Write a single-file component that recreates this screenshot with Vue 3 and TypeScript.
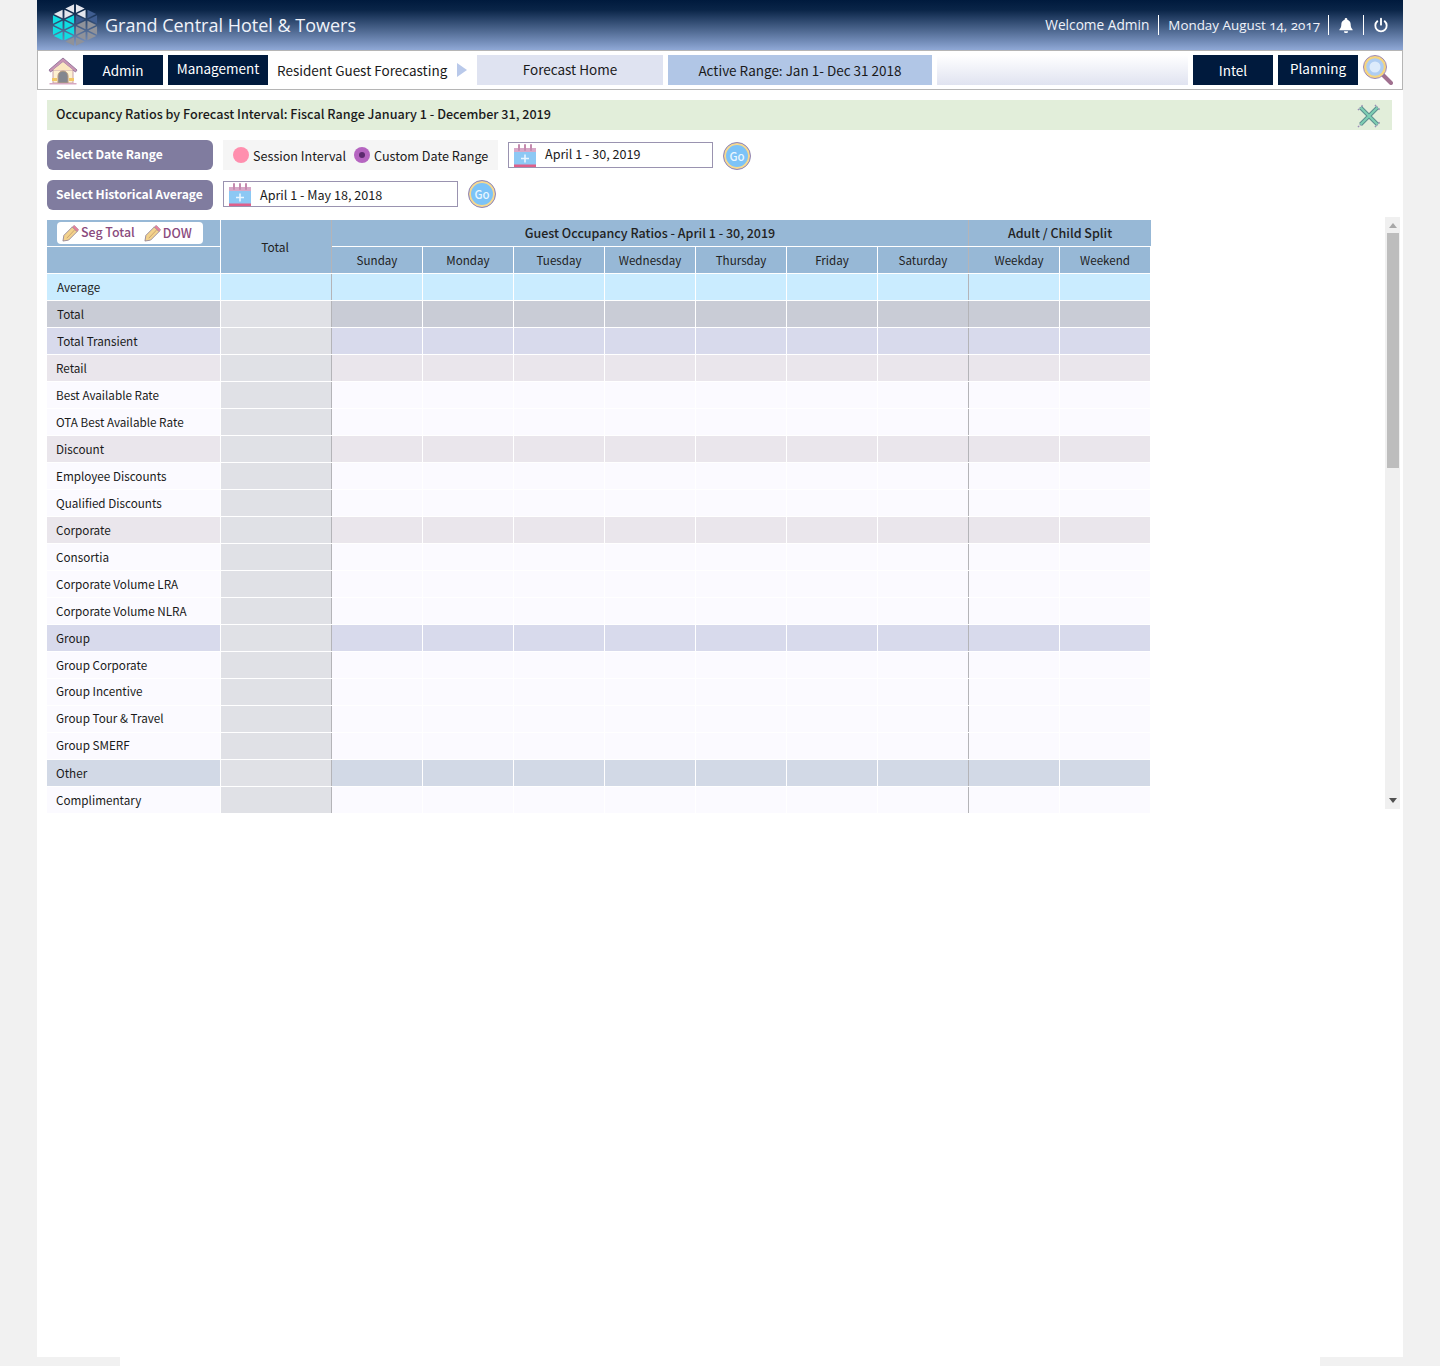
<script setup lang="ts">
interface Row {
  name: string
  tone: string
  lift?: boolean
}

const days = ['Sunday', 'Monday', 'Tuesday', 'Wednesday', 'Thursday', 'Friday', 'Saturday', 'Weekday', 'Weekend']

const rows: Row[] = [
  { name: 'Average', tone: 'avg' },
  { name: 'Total', tone: 'total' },
  { name: 'Total Transient', tone: 'band' },
  { name: 'Retail', tone: 'sub' },
  { name: 'Best Available Rate', tone: 'plain' },
  { name: 'OTA Best Available Rate', tone: 'plain' },
  { name: 'Discount', tone: 'sub' },
  { name: 'Employee Discounts', tone: 'plain' },
  { name: 'Qualified Discounts', tone: 'plain' },
  { name: 'Corporate', tone: 'sub' },
  { name: 'Consortia', tone: 'plain' },
  { name: 'Corporate Volume LRA', tone: 'plain' },
  { name: 'Corporate Volume NLRA', tone: 'plain' },
  { name: 'Group', tone: 'band' },
  { name: 'Group Corporate', tone: 'plain' },
  { name: 'Group Incentive', tone: 'plain', lift: true },
  { name: 'Group Tour & Travel', tone: 'plain', lift: true },
  { name: 'Group SMERF', tone: 'plain', lift: true },
  { name: 'Other', tone: 'other' },
  { name: 'Complimentary', tone: 'plain' },
]

// triangle lattice of the hotel logo, four columns wide
function logoTriangles() {
  const out: { points: string; fill: string }[] = []
  const cw = 11.5
  const s = 11
  const line = (k: number) => {
    const top = Math.abs(k - 2) * (s / 2)
    const pts: number[] = []
    for (let y = top; y <= 44 - top + 0.01; y += s) pts.push(y)
    return pts
  }
  const add = (a: number[], b: number[], c: number[]) => {
    const cx = (a[0] + b[0] + c[0]) / 3
    const cy = (a[1] + b[1] + c[1]) / 3
    const dx = cx - 23
    const dy = cy - 22
    let fill = '#8f929a'
    if (dy < -8 && dx < 12) fill = '#e4e6ee'
    else if (dx < 0 && dy < 16) fill = '#0fdde2'
    else if (dy < -1) fill = '#3f5d90'
    const points = [a, b, c]
      .map((p) => `${(cx + (p[0] - cx) * 0.76).toFixed(2)},${(cy + (p[1] - cy) * 0.76).toFixed(2)}`)
      .join(' ')
    out.push({ points, fill })
  }
  for (let k = 0; k < 4; k++) {
    const left = line(k)
    const right = line(k + 1)
    const x0 = k * cw
    const x1 = x0 + cw
    const long = left.length > right.length ? left : right
    const short = left.length > right.length ? right : left
    const xl = left.length > right.length ? x0 : x1
    const xs = left.length > right.length ? x1 : x0
    for (let i = 0; i < long.length - 1; i++) {
      add([xl, long[i]], [xl, long[i + 1]], [xs, short[i]])
    }
    for (let i = 0; i < short.length - 1; i++) {
      add([xs, short[i]], [xs, short[i + 1]], [xl, long[i + 1]])
    }
  }
  return out
}

const triangles = logoTriangles()
</script>

<template>
  <div class="page">
    <header class="topbar">
      <svg class="logo" viewBox="0 0 46 44">
        <polygon v-for="(t, i) in triangles" :key="i" :points="t.points" :fill="t.fill" />
      </svg>
      <span class="hotel">Grand Central Hotel &amp; Towers</span>
      <div class="top-right">
        <span class="top-item first">Welcome Admin</span>
        <span class="top-item date">Monday August 14, 2017</span>
        <span class="top-item icon-item">
          <svg viewBox="0 0 24 24" width="16" height="16" fill="#fff">
            <path d="M12 1.500a2 2 0 0 0-2 2v.6C6.900 5 5 7.600 5 11c0 4-1 6-3 8v1h20v-1c-2-2-3-4-3-8 0-3.400-1.900-6-5-6.900v-.6a2 2 0 0 0-2-2z" />
            <path d="M9 21.500a3 3 0 0 0 6 0z" />
          </svg>
        </span>
        <span class="top-item icon-item last">
          <svg viewBox="0 0 24 24" width="16" height="16" fill="none" stroke="#fff" stroke-width="2.800" stroke-linecap="round">
            <path d="M12 2.500v9" />
            <path d="M6.500 6.500a8.500 8.500 0 1 0 11 0" />
          </svg>
        </span>
      </div>
    </header>

    <nav class="navbar">
      <svg class="home" viewBox="0 0 30 28">
        <path d="M5 13h20v13H5z" fill="#fdf0d0" stroke="#c9a0a8" />
        <path d="M15 1 1 13l1.500 2L15 5l12.500 10 1.500-2z" fill="#c995b4" stroke="#8f7098" stroke-width=".9" />
        <path d="M15 5 5 13h20z" fill="#fbe6c0" />
        <path d="M10 26v-7a5 5 0 0 1 10 0v7z" fill="#84868f" stroke="#b89a80" />
        <path d="M4 21h5v3H4zM21 21h5v3h-5z" fill="#f2c766" />
        <path d="M1.500 26h27v1.500h-27z" fill="#d7a8c0" />
      </svg>
      <span class="nav-btn">Admin</span>
      <span class="nav-btn mgmt raised">Management</span>
      <span class="crumb">Resident Guest Forecasting</span>
      <span class="arrow" />
      <span class="nav-box forecast">Forecast Home</span>
      <span class="nav-box range">Active Range: Jan 1- Dec 31 2018</span>
      <span class="nav-box blank" />
      <span class="nav-btn">Intel</span>
      <span class="nav-btn raised">Planning</span>
      <svg class="search" viewBox="0 0 30 30">
        <path d="M20 20 28 28" stroke="#a0708f" stroke-width="4" stroke-linecap="round" />
        <circle cx="12" cy="12" r="10" fill="#aecdf2" stroke="#f6d57e" stroke-width="2.400" />
        <circle cx="12" cy="12" r="11.500" fill="none" stroke="#9c88b4" stroke-width="1" />
        <circle cx="12" cy="12" r="5.500" fill="#dcebfb" />
      </svg>
    </nav>

    <main class="content">
      <div class="title-bar">
        <span>Occupancy Ratios by Forecast Interval: Fiscal Range January 1 - December 31, 2019</span>
        <svg class="close" viewBox="0 0 24 24">
          <path d="M1 6 6 1M18 23l5-5M1 23l5-5M18 1l5 5" stroke="#9a8cb6" stroke-width="1.500" stroke-dasharray="1.500 1" />
          <path d="M3.500 3.500 20.500 20.500M20.500 3.500 3.500 20.500" stroke="#5c8f90" stroke-width="4" />
          <path d="M3.500 3.500 20.500 20.500M20.500 3.500 3.500 20.500" stroke="#7fd0b4" stroke-width="2" />
        </svg>
      </div>

      <div class="filter first-filter">
        <span class="filter-label">Select Date Range</span>
        <div class="radio-box">
          <span class="radio pink" />
          <span class="radio-text">Session Interval</span>
          <span class="radio purple"><i /></span>
          <span class="radio-text">Custom Date Range</span>
        </div>
        <div class="date-input short">
          <svg class="cal" viewBox="0 0 24 24">
            <path d="M1 4h22v19H1z" fill="#8cc8f4" />
            <path d="M1 20.500h22V23H1z" fill="#df5f8a" />
            <path d="M1 4h22v4H1z" fill="#d7a8c8" />
            <path d="M6 1v5M12 1v5M18 1v5" stroke="#c48aaf" stroke-width="2" stroke-linecap="round" />
            <path d="M12 10.500v8M8 14.500h8" stroke="#e8f6ff" stroke-width="1.600" />
          </svg>
          <span>April 1 - 30, 2019</span>
        </div>
        <span class="go"><b>Go</b></span>
      </div>

      <div class="filter second-filter">
        <span class="filter-label">Select Historical Average</span>
        <div class="date-input long">
          <svg class="cal" viewBox="0 0 24 24">
            <path d="M1 4h22v19H1z" fill="#8cc8f4" />
            <path d="M1 20.500h22V23H1z" fill="#df5f8a" />
            <path d="M1 4h22v4H1z" fill="#d7a8c8" />
            <path d="M6 1v5M12 1v5M18 1v5" stroke="#c48aaf" stroke-width="2" stroke-linecap="round" />
            <path d="M12 10.500v8M8 14.500h8" stroke="#e8f6ff" stroke-width="1.600" />
          </svg>
          <span>April 1 - May 18, 2018</span>
        </div>
        <span class="go"><b>Go</b></span>
      </div>

      <div class="table-area">
        <div class="table-clip">
          <div class="grid">
            <div class="head seg-cell">
              <div class="seg-pill">
                <svg class="pencil" viewBox="0 0 18 18">
                  <path d="M1 17l1-6L11 2l5 5-9 9z" fill="#f3d28c" stroke="#8f7f90" stroke-width=".9" />
                  <path d="M5 14 13.500 5" stroke="#c9a070" stroke-width="1" />
                  <path d="M11 2 13 .3 17.700 5 16 7z" fill="#e87f9c" stroke="#8f7f90" stroke-width=".5" />
                </svg>
                <span>Seg Total</span>
                <svg class="pencil second" viewBox="0 0 18 18">
                  <path d="M1 17l1-6L11 2l5 5-9 9z" fill="#f3d28c" stroke="#8f7f90" stroke-width=".9" />
                  <path d="M5 14 13.500 5" stroke="#c9a070" stroke-width="1" />
                  <path d="M11 2 13 .3 17.700 5 16 7z" fill="#e87f9c" stroke="#8f7f90" stroke-width=".5" />
                </svg>
                <span class="dow">DOW</span>
              </div>
            </div>
            <div class="head total-head divider">Total</div>
            <div class="head span-days divider strong">Guest Occupancy Ratios - April 1 - 30, 2019</div>
            <div class="head span-split strong">Adult / Child Split</div>
            <div class="head blank-head" />
            <div
              v-for="(d, i) in days"
              :key="d"
              class="head"
              :class="{ divider: i === 6, weekday: i === 7 }"
            >
              {{ d }}
            </div>

            <template v-for="(r, idx) in rows" :key="r.name">
              <div class="cell name" :class="[r.tone, { indent: idx < 3, lift: r.lift }]">{{ r.name }}</div>
              <div class="cell total-col divider" :class="r.tone === 'avg' ? 'avg' : ''" />
              <div
                v-for="(d, i) in days"
                :key="d"
                class="cell"
                :class="[r.tone, { divider: i === 6 }]"
              />
            </template>
          </div>
        </div>

        <div class="scrollbar">
          <span class="arrow-up" />
          <span class="thumb" />
          <span class="arrow-down" />
        </div>
      </div>
    </main>
  </div>
  <div class="foot" />
</template>

<style>
html,
body {
  margin: 0;
  background: #f1f1f1;
}
</style>

<style scoped>
.page {
  width: 1366px;
  height: 1357px;
  margin: 0 auto;
  background: #fff;
  color: #1a1a1a;
  font-family: 'Noto Sans CJK SC', 'Noto Sans', sans-serif;
  font-size: 12px;
  overflow: hidden;
}

.foot {
  width: 1200px;
  height: 9px;
  margin: 0 auto;
  background: #fff;
}

.topbar {
  display: flex;
  align-items: center;
  height: 50px;
  padding: 0 14px 0 15px;
  box-sizing: border-box;
  background: linear-gradient(180deg, #001a3d 0%, #0a2548 20%, #8fa8d6 100%);
  color: #fff;
}

.logo {
  width: 46px;
  height: 44px;
}

.hotel {
  margin-left: 7px;
  font-family: 'Open Sans', sans-serif;
  font-size: 18px;
  line-height: 24px;
  color: #f0f3fa;
}

.top-right {
  display: flex;
  align-items: center;
  margin-left: auto;
  font-family: 'Open Sans', sans-serif;
  font-size: 13.700px;
  line-height: 18px;
  color: #f0f3fa;
}

.top-item {
  display: flex;
  align-items: center;
  height: 20px;
  padding: 0 9px;
  border-left: 1px solid #fff;
}

.top-item.first {
  border-left: none;
}

.top-item.date {
  padding-right: 8px;
  font-size: 13.400px;
  font-variant-numeric: oldstyle-nums;
}

.icon-item svg {
  display: block;
}

.icon-item.last {
  padding-right: 0;
}

.navbar {
  display: flex;
  align-items: flex-start;
  gap: 5px;
  height: 40px;
  padding: 4px 9px 0 10px;
  box-sizing: border-box;
  border: 1px solid #b5b5b5;
}

.home {
  width: 30px;
  height: 28px;
  margin-top: 2px;
}

.nav-btn {
  flex: none;
  width: 80px;
  height: 30px;
  background: #001a3d;
  color: #fff;
  font-size: 13.500px;
  line-height: 31px;
  text-align: center;
}

.nav-btn.raised {
  line-height: 27px;
}

.nav-btn.mgmt {
  width: 100px;
}

.crumb {
  width: 170px;
  margin-left: 4px;
  font-size: 13.500px;
  line-height: 31px;
  white-space: nowrap;
}

.arrow {
  width: 0;
  height: 0;
  margin: 8px 5px 0 5px;
  border-left: 10px solid #b9c9ea;
  border-top: 7px solid transparent;
  border-bottom: 7px solid transparent;
}

.nav-box {
  flex: none;
  height: 30px;
  font-size: 13.500px;
  line-height: 29px;
  text-align: center;
  box-sizing: border-box;
}

.forecast {
  width: 186px;
  background: #dfe3f1;
}

.range {
  width: 264px;
  line-height: 31px;
  background: #b1c6e6;
}

.blank {
  width: 251px;
  background: linear-gradient(180deg, #fff 0%, #e0e3f0 100%);
}

.search {
  flex: none;
  width: 30px;
  height: 30px;
}

.content {
  padding: 10px 0 0 10px;
}

.title-bar {
  display: flex;
  align-items: center;
  justify-content: space-between;
  width: 1345px;
  height: 30px;
  padding: 0 10px 0 9px;
  box-sizing: border-box;
  background: #e2eeda;
  font-size: 12.600px;
  font-weight: 500;
  line-height: 28px;
}

.title-bar > span {
  padding-bottom: 2px;
}

.close {
  width: 24px;
  height: 24px;
  margin-top: 2px;
  margin-right: 1px;
}

.filter {
  display: flex;
  align-items: flex-start;
}

.first-filter {
  margin-top: 10px;
}

.second-filter {
  margin-top: 10px;
}

.filter-label {
  flex: none;
  width: 166px;
  height: 30px;
  padding-left: 9px;
  box-sizing: border-box;
  border-radius: 6px;
  background: #807c9f;
  color: #fff;
  font-size: 12.100px;
  font-weight: 700;
  line-height: 28px;
  white-space: nowrap;
}

.radio-box {
  display: flex;
  align-items: center;
  width: 275px;
  height: 30px;
  margin-left: 10px;
  padding-left: 10px;
  box-sizing: border-box;
  background: #f5f5f5;
  font-size: 12.600px;
  line-height: 30px;
}

.radio {
  flex: none;
  display: flex;
  align-items: center;
  justify-content: center;
  width: 16px;
  height: 16px;
  border-radius: 50%;
}

.radio.pink {
  background: #ff8fae;
}

.radio.purple {
  margin-left: 8px;
  background: #b565c0;
}

.radio.purple i {
  width: 6px;
  height: 6px;
  border-radius: 50%;
  background: #5c2a6e;
}

.radio-text {
  margin-left: 4px;
  padding-top: 2px;
  white-space: nowrap;
}

.date-input {
  display: flex;
  align-items: center;
  height: 26px;
  box-sizing: border-box;
  border: 1px solid #9a93b0;
  font-size: 12.600px;
  background: #fff;
}

.date-input.short {
  width: 205px;
  margin-top: 2px;
  margin-left: 10px;
}

.date-input.short span {
  padding-bottom: 4px;
}

.date-input.long {
  width: 235px;
  margin-top: 1px;
  margin-left: 10px;
}

.cal {
  flex: none;
  width: 24px;
  height: 24px;
  margin: 1px 8px 0 4px;
}

.go {
  flex: none;
  display: flex;
  align-items: center;
  justify-content: center;
  width: 28px;
  height: 28px;
  margin-left: 10px;
  margin-top: 2px;
  box-sizing: border-box;
  border: 1px solid #9c86ad;
  border-radius: 50%;
  background: #7cc3f7;
  box-shadow: inset 0 0 0 2px #f7d88e;
  color: #e8f6ff;
}

.second-filter .go {
  margin-top: 0;
}

.go b {
  font-size: 11.500px;
  font-weight: 500;
  line-height: 14px;
}

.table-area {
  display: flex;
  align-items: flex-start;
  margin-top: 7px;
}

.table-clip {
  width: 1104px;
  height: 593px;
  margin-top: 3px;
  overflow: hidden;
}

.grid {
  display: grid;
  grid-template-columns: 173px 110px repeat(9, 90px);
  grid-auto-rows: 26px;
  gap: 1px;
  font-size: 11.600px;
}

.head {
  display: flex;
  align-items: center;
  justify-content: center;
  background: #97b8d6;
  color: #222;
  line-height: 26px;
}

.head.weekday {
  padding-left: 10px;
}

.total-head {
  grid-row: span 2;
  padding-right: 2px;
  font-size: 12px;
}

.strong {
  font-size: 12.500px;
  font-weight: 500;
}

.seg-cell {
  justify-content: flex-start;
  padding-left: 10px;
}

.seg-pill {
  display: flex;
  align-items: center;
  width: 146px;
  height: 22px;
  padding-left: 5px;
  box-sizing: border-box;
  border-radius: 4px;
  background: #fff;
  color: #8a4a7d;
  font-size: 12.400px;
  font-weight: 500;
  line-height: 20px;
  white-space: nowrap;
}

.seg-pill span {
  padding-bottom: 2px;
}

.seg-pill .dow {
  padding-bottom: 0;
}

.pencil {
  flex: none;
  width: 17px;
  height: 17px;
  margin-right: 2px;
}

.pencil.second {
  margin-left: 9px;
}

.span-days {
  grid-column: span 7;
}

.span-split {
  grid-column: span 2;
  margin-right: -1px;
}

.divider {
  box-shadow: 1px 0 0 #b4b4b8;
}

.cell {
  background: #fbfaff;
}

.cell.name {
  padding-left: 9px;
  font-size: 11.700px;
  line-height: 26px;
  white-space: nowrap;
}

.cell.name.indent {
  padding-left: 10px;
}

.cell.name.lift {
  line-height: 24px;
}

.cell.avg {
  background: #caecff;
}

.cell.total {
  background: #c9ccd6;
}

.cell.band {
  background: #d8daec;
}

.cell.sub {
  background: #eae6ec;
}

.cell.other {
  background: #d2d9e6;
}

.cell.total-col {
  background: #e0e1e6;
}

.cell.total-col.avg {
  background: #caecff;
}

.scrollbar {
  display: flex;
  flex-direction: column;
  align-items: center;
  flex: none;
  width: 15px;
  height: 592px;
  margin-left: 234px;
  background: #f0f0f0;
}

.thumb {
  width: 12px;
  height: 235px;
  margin-left: 1px;
  background: #bdbdbd;
}

.arrow-up {
  width: 0;
  height: 0;
  margin: 6px 0 5px;
  border-left: 4px solid transparent;
  border-right: 4px solid transparent;
  border-bottom: 5px solid #a8a8a8;
}

.arrow-down {
  width: 0;
  height: 0;
  margin-top: auto;
  margin-bottom: 6px;
  border-left: 4px solid transparent;
  border-right: 4px solid transparent;
  border-top: 5px solid #505050;
}
</style>
